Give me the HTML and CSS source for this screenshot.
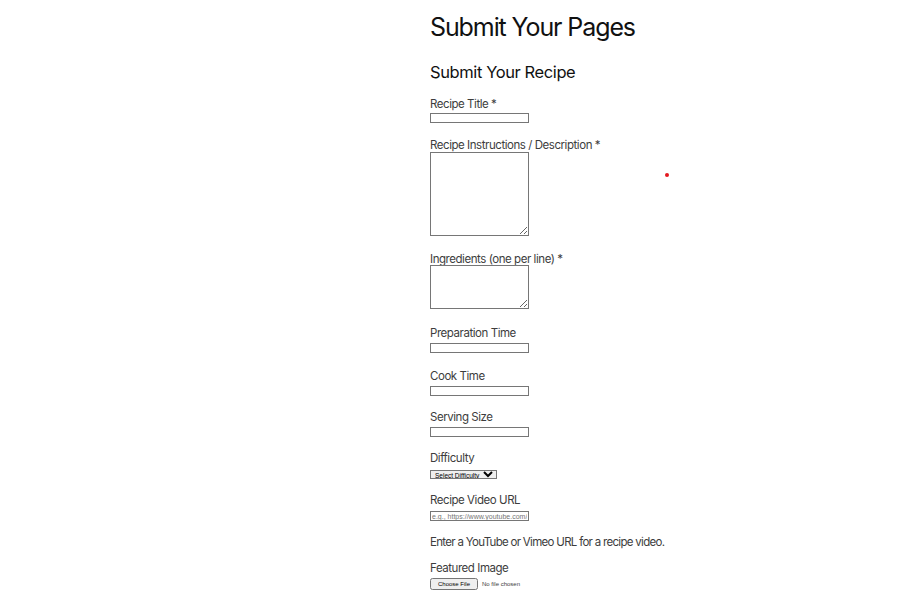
FILE: index.html
```html
<!DOCTYPE html>
<html>
<head>
<meta charset="utf-8">
<link rel="stylesheet" href="styles.css">
</head>
<body>
<main class="page">
  <h1 class="title">Submit Your Pages</h1>
  <h2 class="subtitle">Submit Your Recipe</h2>
  <form class="form">
    <div class="field f-title">
      <label class="label">Recipe Title *</label>
      <input class="input" type="text">
    </div>
    <div class="field f-instr">
      <label class="label">Recipe Instructions / Description *</label>
      <textarea class="area area-tall"></textarea>
    </div>
    <div class="field f-ingr">
      <label class="label">Ingredients (one per line) *</label>
      <textarea class="area area-short"></textarea>
    </div>
    <div class="field f-prep">
      <label class="label">Preparation Time</label>
      <input class="input" type="text">
    </div>
    <div class="field">
      <label class="label">Cook Time</label>
      <input class="input" type="text">
    </div>
    <div class="field">
      <label class="label">Serving Size</label>
      <input class="input" type="text">
    </div>
    <div class="field f-diff">
      <label class="label">Difficulty</label>
      <select class="select"><option>Select Difficulty</option></select>
    </div>
    <div class="field f-video">
      <label class="label">Recipe Video URL</label>
      <input class="input input-url" type="text" placeholder="e.g., https://www.youtube.com/watch?v=...">
    </div>
    <p class="help">Enter a YouTube or Vimeo URL for a recipe video.</p>
    <div class="field f-file">
      <label class="label">Featured Image</label>
      <input class="file" type="file">
    </div>
  </form>
  <span class="dot"></span>
</main>
</body>
</html>
```
FILE: styles.css
```css
html, body {
  margin: 0;
  padding: 0;
  background: #fff;
}
body {
  font-family: Inter, "Noto Sans", sans-serif;
  color: #3d3d3d;
}
.page {
  padding-left: 430px;
  padding-top: 10px;
}
.title {
  margin: 0;
  font-size: 25px;
  font-weight: 400;
  line-height: 34px;
  color: #111;
  letter-spacing: -1.1px;
}
.subtitle {
  margin: 17px 0 0;
  font-size: 16.5px;
  font-weight: 400;
  line-height: 22px;
  color: #111;
  letter-spacing: -0.4px;
}
.form {
  margin-top: 13px;
}
.field {
  display: flex;
  flex-direction: column;
  align-items: flex-start;
  margin-bottom: 13px;
}
.label {
  font-size: 11.5px;
  line-height: 16px;
  letter-spacing: -0.45px;
  color: #3d3d3d;
  margin-bottom: 2px;
}
.f-title { margin-bottom: 14px; }
.f-title .label { margin-bottom: 1px; }
.f-instr { margin-bottom: 15px; }
.f-instr .label { margin-bottom: -1px; }
.f-ingr { margin-bottom: 16px; }
.f-ingr .label { margin-bottom: -2px; }
.f-prep { margin-bottom: 15px; }
.f-diff .label { margin-bottom: 4px; }
.f-video .label { margin-bottom: 3px; }
.f-file .label { margin-bottom: 2px; }

.input {
  box-sizing: border-box;
  width: 99px;
  height: 10px;
  padding: 0 1px;
  margin: 0;
  border: 1px solid #767676;
  font-size: 7px;
  font-family: Arial, "Liberation Sans", sans-serif;
}
.input::placeholder {
  color: #757575;
}
.area {
  box-sizing: border-box;
  width: 99px;
  margin: 0;
  border: 1px solid #767676;
  padding: 2px;
}
.area-tall {
  height: 84px;
}
.area-short {
  height: 44px;
}
.select {
  box-sizing: border-box;
  width: 67px;
  height: 9px;
  margin: 0;
  padding: 0;
  font-size: 6.5px;
  font-family: Arial, "Liberation Sans", sans-serif;
  border: 1px solid #767676;
  color: #000;
}
.help {
  margin: 0 0 10px;
  font-size: 11.5px;
  line-height: 16px;
  letter-spacing: -0.7px;
  color: #3d3d3d;
}
.file {
  font-size: 6px;
  font-family: Arial, "Liberation Sans", sans-serif;
  margin: 0;
}
.dot {
  position: absolute;
  left: 665px;
  top: 173px;
  width: 4px;
  height: 4px;
  border-radius: 50%;
  background: #e3191f;
}
```
